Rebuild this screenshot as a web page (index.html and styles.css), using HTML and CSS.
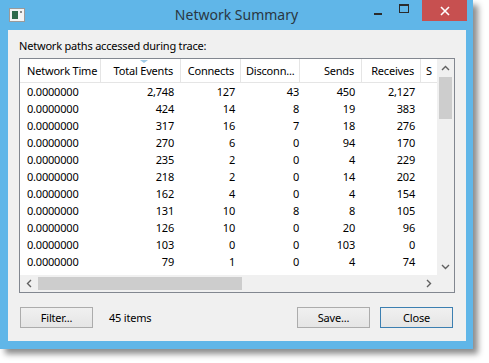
FILE: index.html
```html
<!DOCTYPE html>
<html>
<head>
<meta charset="utf-8">
<link rel="stylesheet" href="styles.css">
</head>
<body>
<div class="window">
  <div class="titlebar">
    <div class="tb-left">
      <svg class="app-icon" width="16" height="14" viewBox="0 0 16 14">
        <rect x="0.5" y="0.5" width="15" height="13" fill="#f4f4f4" stroke="#9a9a9a"/>
        <rect x="3" y="3" width="6" height="8" fill="#2f6a4a"/>
        <rect x="11" y="3" width="2" height="2" fill="#8a8a8a"/>
      </svg>
    </div>
    <div class="title">Network Summary</div>
    <div class="tb-right">
      <div class="ctl min"><svg width="9" height="9" viewBox="0 0 9 9"><rect x="0" y="6" width="8" height="2" fill="#2b2b2b"/></svg></div>
      <div class="ctl max"><svg width="11" height="10" viewBox="0 0 11 10"><rect x="0.5" y="0.5" width="9" height="8" fill="none" stroke="#2b2b2b"/><rect x="0" y="0" width="10" height="2" fill="#2b2b2b"/></svg></div>
      <div class="ctl close"><svg width="10" height="10" viewBox="0 0 10 10"><path d="M1 1 L9 9 M9 1 L1 9" stroke="#fff" stroke-width="1.6"/></svg></div>
    </div>
  </div>
  <div class="client">
    <div class="caption">Network paths accessed during trace:</div>
    <div class="listbox">
      <div class="content">
        <div class="row head">
          <div class="c c1">Network Time</div>
          <div class="c c2 r"><span class="sort"></span>Total Events</div>
          <div class="c c3 r">Connects</div>
          <div class="c c4">Disconn...</div>
          <div class="c c5 r">Sends</div>
          <div class="c c6 r">Receives</div>
          <div class="c c7">S</div>
        </div>
        <div class="row"><div class="c c1">0.0000000</div><div class="c c2 r">2,748</div><div class="c c3 r">127</div><div class="c c4 r">43</div><div class="c c5 r">450</div><div class="c c6 r">2,127</div><div class="c c7"></div></div>
        <div class="row"><div class="c c1">0.0000000</div><div class="c c2 r">424</div><div class="c c3 r">14</div><div class="c c4 r">8</div><div class="c c5 r">19</div><div class="c c6 r">383</div><div class="c c7"></div></div>
        <div class="row"><div class="c c1">0.0000000</div><div class="c c2 r">317</div><div class="c c3 r">16</div><div class="c c4 r">7</div><div class="c c5 r">18</div><div class="c c6 r">276</div><div class="c c7"></div></div>
        <div class="row"><div class="c c1">0.0000000</div><div class="c c2 r">270</div><div class="c c3 r">6</div><div class="c c4 r">0</div><div class="c c5 r">94</div><div class="c c6 r">170</div><div class="c c7"></div></div>
        <div class="row"><div class="c c1">0.0000000</div><div class="c c2 r">235</div><div class="c c3 r">2</div><div class="c c4 r">0</div><div class="c c5 r">4</div><div class="c c6 r">229</div><div class="c c7"></div></div>
        <div class="row"><div class="c c1">0.0000000</div><div class="c c2 r">218</div><div class="c c3 r">2</div><div class="c c4 r">0</div><div class="c c5 r">14</div><div class="c c6 r">202</div><div class="c c7"></div></div>
        <div class="row"><div class="c c1">0.0000000</div><div class="c c2 r">162</div><div class="c c3 r">4</div><div class="c c4 r">0</div><div class="c c5 r">4</div><div class="c c6 r">154</div><div class="c c7"></div></div>
        <div class="row"><div class="c c1">0.0000000</div><div class="c c2 r">131</div><div class="c c3 r">10</div><div class="c c4 r">8</div><div class="c c5 r">8</div><div class="c c6 r">105</div><div class="c c7"></div></div>
        <div class="row"><div class="c c1">0.0000000</div><div class="c c2 r">126</div><div class="c c3 r">10</div><div class="c c4 r">0</div><div class="c c5 r">20</div><div class="c c6 r">96</div><div class="c c7"></div></div>
        <div class="row"><div class="c c1">0.0000000</div><div class="c c2 r">103</div><div class="c c3 r">0</div><div class="c c4 r">0</div><div class="c c5 r">103</div><div class="c c6 r">0</div><div class="c c7"></div></div>
        <div class="row"><div class="c c1">0.0000000</div><div class="c c2 r">79</div><div class="c c3 r">1</div><div class="c c4 r">0</div><div class="c c5 r">4</div><div class="c c6 r">74</div><div class="c c7"></div></div>
        <div class="row"><div class="c c1">0.0000000</div><div class="c c2 r">67</div><div class="c c3 r">5</div><div class="c c4 r">0</div><div class="c c5 r">16</div><div class="c c6 r">41</div><div class="c c7"></div></div>
      </div>
      <div class="vscroll">
        <div class="arrow"><svg width="9" height="6" viewBox="0 0 9 6"><path d="M1 5 L4.5 1.5 L8 5" fill="none" stroke="#606060" stroke-width="1.4"/></svg></div>
        <div class="vtrack"><div class="vthumb"></div></div>
        <div class="arrow"><svg width="9" height="6" viewBox="0 0 9 6"><path d="M1 1 L4.5 4.5 L8 1" fill="none" stroke="#606060" stroke-width="1.4"/></svg></div>
      </div>
      <div class="hscroll">
        <div class="harrow"><svg width="6" height="9" viewBox="0 0 6 9"><path d="M5 1 L1.5 4.5 L5 8" fill="none" stroke="#606060" stroke-width="1.4"/></svg></div>
        <div class="htrack"><div class="hthumb"></div></div>
        <div class="harrow"><svg width="6" height="9" viewBox="0 0 6 9"><path d="M1 1 L4.5 4.5 L1 8" fill="none" stroke="#606060" stroke-width="1.4"/></svg></div>
      </div>
      <div class="corner"></div>
    </div>
    <div class="buttons">
      <button class="btn">Filter...</button>
      <span class="count">45 items</span>
      <span class="spacer"></span>
      <button class="btn">Save...</button>
      <button class="btn default">Close</button>
    </div>
  </div>
</div>
</body>
</html>
```

FILE: styles.css
```css
* { box-sizing: border-box; }
html, body {
  margin: 0;
  padding: 0;
  background: #ffffff;
}
body {
  width: 489px;
  height: 363px;
  overflow: hidden;
  font-family: "Noto Sans", "Open Sans", sans-serif;
  font-size: 11px;
  letter-spacing: -0.2px;
  color: #000;
}
.window {
  width: 473px;
  height: 349px;
  background: #60b6e8;
  box-shadow: 5px 5px 6px rgba(0, 0, 0, 0.45);
  display: flex;
  flex-direction: column;
}
.titlebar {
  height: 30px;
  display: grid;
  grid-template-columns: 1fr auto 1fr;
  align-items: start;
}
.tb-left {
  padding: 8px 0 0 9px;
}
.app-icon { display: block; }
.title {
  font-size: 14px;
  letter-spacing: 0;
  color: #2a3642;
  line-height: 18px;
  padding-top: 6px;
}
.tb-right {
  display: flex;
  justify-content: flex-end;
  padding-right: 6px;
}
.ctl {
  height: 21px;
  display: flex;
  align-items: center;
  justify-content: center;
}
.ctl.min { width: 26px; padding-top: 1px; }
.ctl.max { width: 27px; margin-right: 4px; padding-bottom: 4px; }
.ctl.close { width: 45px; background: #c75050; }
.ctl svg { display: block; }
.client {
  flex: 1;
  margin: 0 7px 8px 8px;
  background: #f0f0f0;
  padding: 8px 11px 0 11px;
  display: flex;
  flex-direction: column;
}
.caption {
  line-height: 15px;
  height: 15px;
  margin-bottom: 5px;
}
.listbox {
  height: 235px;
  border: 1px solid #828790;
  background: #fff;
  display: grid;
  grid-template-columns: 417px 17px;
  grid-template-rows: 216px 17px;
}
.content {
  overflow: hidden;
  position: relative;
}
.row {
  display: grid;
  grid-template-columns: 81px 80px 60px 59px 62px 59px 16px;
  height: 17px;
  line-height: 17px;
  white-space: nowrap;
}
.row.head {
  height: 24px;
  line-height: 23px;
  border-bottom: 1px solid #e5e5e5;
}
.c {
  overflow: hidden;
  padding: 0 6px;
}
.c.c1 { padding-left: 7px; }
.r { text-align: right; }
.c2.r { padding-right: 7px; }
.c3.r { padding-right: 6px; }
.c4.r { padding-right: 1px; }
.c5.r { padding-right: 7px; }
.c6.r { padding-right: 6px; }
.head .c { border-right: 1px solid #e5e5e5; position: relative; }
.head .c4 { padding-left: 5px; padding-right: 0; }
.head .c7 { border-right: none; padding-left: 5px; }
.sort {
  position: absolute;
  left: 39px;
  top: 1px;
  width: 0;
  height: 0;
  border-left: 4px solid transparent;
  border-right: 4px solid transparent;
  border-top: 3px solid #9fc9e6;
}
.vscroll {
  background: #f0f0f0;
  display: flex;
  flex-direction: column;
}
.arrow {
  height: 17px;
  display: flex;
  align-items: center;
  justify-content: center;
}
.vtrack {
  flex: 1;
  padding: 1px 2px 0 2px;
}
.vthumb {
  height: 42px;
  background: #cdcdcd;
}
.hscroll {
  background: #f0f0f0;
  display: flex;
}
.harrow {
  width: 17px;
  display: flex;
  align-items: center;
  justify-content: center;
}
.htrack {
  flex: 1;
  padding: 2px 0 2px 1px;
}
.hthumb {
  width: 204px;
  height: 100%;
  background: #cdcdcd;
}
.corner { background: #f0f0f0; }
.buttons {
  margin-top: 14px;
  padding: 0 2px 0 1px;
  display: flex;
  align-items: center;
  gap: 10px;
}
.btn {
  width: 73px;
  height: 21px;
  border: 1px solid #acacac;
  background: linear-gradient(#f0f0f0, #e5e5e5);
  font-family: inherit;
  font-size: 11px;
  letter-spacing: -0.2px;
  color: #000;
  padding: 0;
}
.btn.default { border-color: #3c7fb1; }
.count { margin-left: 6px; }
.spacer { flex: 1; }
```
